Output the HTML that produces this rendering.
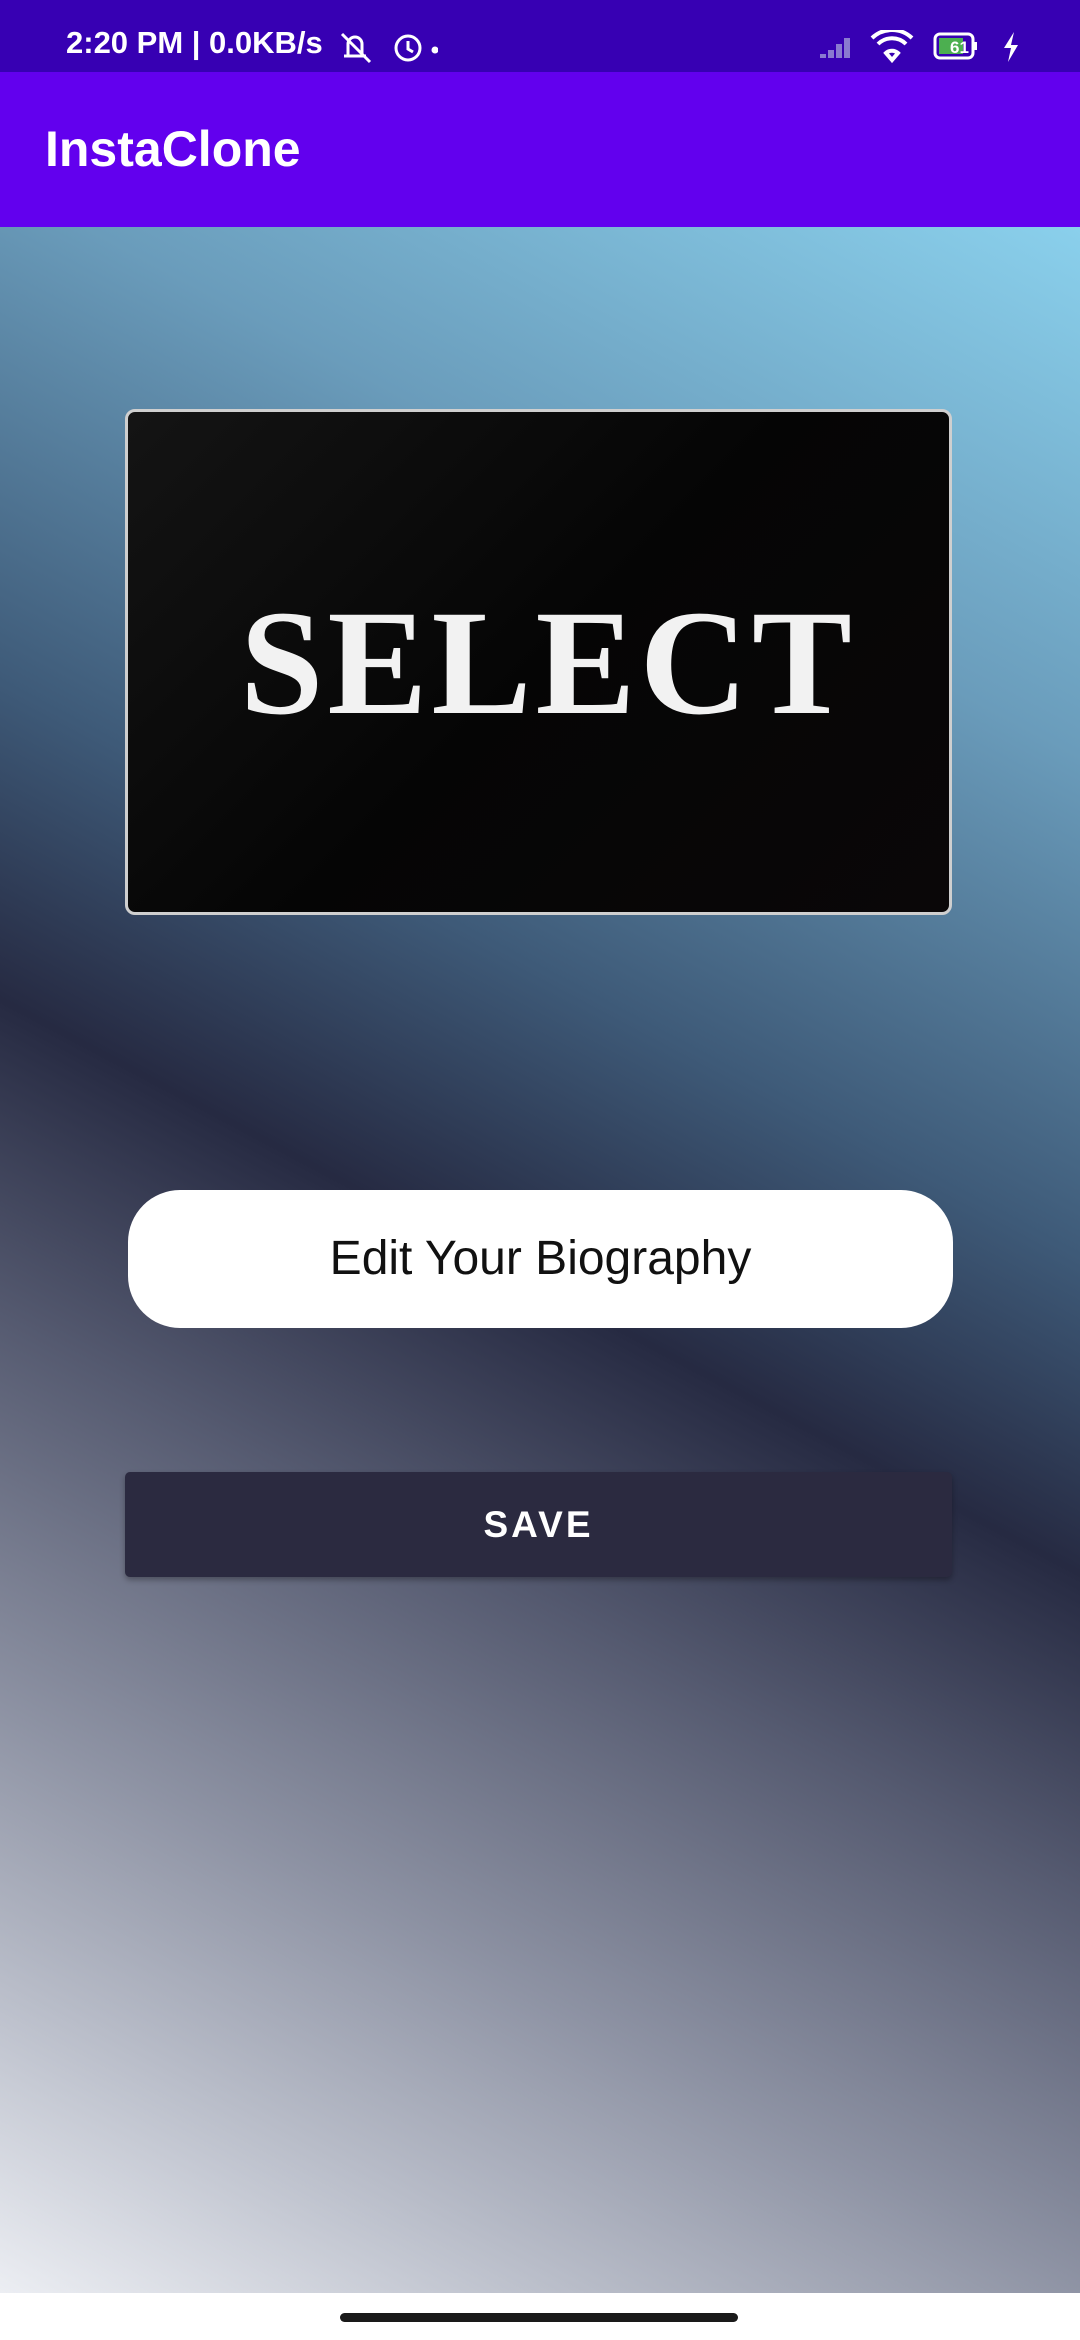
<!DOCTYPE html>
<html><head><meta charset="utf-8"><style>
*{margin:0;padding:0;box-sizing:border-box}
body{width:1080px;height:2340px;overflow:hidden;font-family:"Liberation Sans",sans-serif;position:relative;background:#fff}
.sb{position:absolute;left:0;top:0;width:1080px;height:72px;background:#3700b3;color:#fff}
.sb .t{position:absolute;left:66px;top:27px;font-size:31px;font-weight:bold;line-height:1}
.ab{position:absolute;left:0;top:72px;width:1080px;height:155px;background:#6200ee}
.ab .t{position:absolute;left:45px;top:52px;font-size:50px;color:#fff;font-weight:bold;line-height:1}
.bg{position:absolute;left:0;top:227px;width:1080px;height:2066px;
background:linear-gradient(208deg,#8ad0ec 0%,#6a9cbb 20%,#3e5a78 39%,#262a42 51%,#555a70 63%,#8e93a4 78%,#c0c4cf 90%,#eceef3 100%)}
.img{position:absolute;left:125px;top:409px;width:827px;height:506px;background:linear-gradient(135deg,#141414,#050505 50%,#0a0708);border:3px solid #cfcfcf;border-radius:10px;overflow:hidden}
.img span{position:absolute;left:112px;top:176px;font-family:"Liberation Serif",serif;font-size:150px;font-weight:bold;color:#f2f2f2;letter-spacing:4px;line-height:1}
.bio{position:absolute;left:128px;top:1190px;width:825px;height:138px;background:#fff;border-radius:52px;text-align:center;line-height:138px;font-size:48px;color:#111}
.save{position:absolute;left:125px;top:1472px;width:827px;height:105px;background:#2b2a40;border-radius:5px;text-align:center;line-height:105px;font-size:37px;color:#fff;letter-spacing:3px;font-weight:bold;box-shadow:0 3px 6px rgba(0,0,0,.3)}
.nav{position:absolute;left:0;top:2293px;width:1080px;height:47px;background:#fff}
.nav i{position:absolute;left:340px;top:20px;width:398px;height:9px;border-radius:5px;background:#1a1a1a}
</style></head><body>
<div class="sb"><div class="t">2:20 PM | 0.0KB/s</div>
<svg style="position:absolute;left:338px;top:30px" width="100" height="36" viewBox="0 0 100 36" fill="none" stroke="#fff" stroke-width="3"><path d="M6 26h22M10 26V14a7 7 0 0 1 14 0v12M4 4l28 28"/><circle cx="70" cy="18" r="12"/><path d="M70 11v8l5 3"/><circle cx="97" cy="20" r="2" fill="#fff"/></svg>
<svg style="position:absolute;left:818px;top:30px" width="240" height="34" viewBox="0 0 240 34"><path d="M2 28h6v-4H2zM10 28h6v-8h-6zM18 28h6V14h-6zM26 28h6V8h-6z" fill="#8a7ad0"/><path d="M74 30l-6-7a9 9 0 0 1 12 0zM60 14a20 20 0 0 1 28 0M54 8a29 29 0 0 1 40 0" stroke="#fff" stroke-width="4" fill="none"/><rect x="117" y="4" width="38" height="24" rx="5" fill="none" stroke="#fff" stroke-width="3"/><rect x="121" y="8" width="24" height="16" fill="#4caf50"/><text x="132" y="23" font-size="17" font-weight="bold" fill="#fff" font-family="Liberation Sans">61</text><rect x="156" y="12" width="3" height="8" fill="#fff"/><path d="M196 2l-10 16h7l-3 14 10-17h-7z" fill="#fff"/></svg>
</div>
<div class="ab"><div class="t">InstaClone</div></div>
<div class="bg"></div>
<div class="img"><span>SELECT</span></div>
<div class="bio">Edit Your Biography</div>
<div class="save">SAVE</div>
<div class="nav"><i></i></div>
</body></html>
